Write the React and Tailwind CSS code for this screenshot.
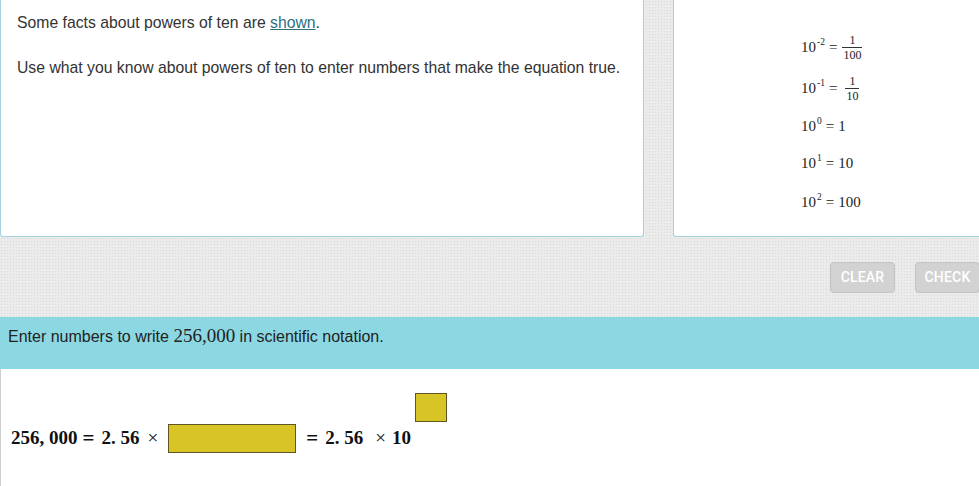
import React from 'react';

const sans = { fontFamily: '"Liberation Sans", Arial, sans-serif' };
const serif = { fontFamily: '"Liberation Serif", "Times New Roman", serif' };

function Frac({ num, den }) {
  return (
    <span className="inline-flex flex-col items-center leading-none mx-[2px]">
      <span className="text-[12px] px-[1px] pb-[1px]">{num}</span>
      <span className="text-[12px] px-[1px] pt-[1px] border-t border-[#333]">{den}</span>
    </span>
  );
}

function Power({ exp }) {
  return (
    <span className="inline-flex items-start leading-none">
      <span>10</span>
      <span className="text-[9.5px] -mt-[2px] ml-[1px]">{exp}</span>
    </span>
  );
}

export default function App() {
  return (
    <div
      className="w-[979px] h-[486px] overflow-hidden flex flex-col bg-[#ebebeb] bg-[image:radial-gradient(circle,#d9d9d9_0.7px,transparent_0.9px)] bg-[size:3px_3px]"
      style={sans}
    >
      {/* top cards */}
      <div className="flex h-[237px] shrink-0">
        <div className="w-[644px] h-full bg-white border-x border-b border-[#a3d4de] rounded-b-[3px] pl-[16px] pt-[14px] text-[15.75px] text-[#333]">
          <p className="leading-[18px]">
            Some facts about powers of ten are{' '}
            <span className="text-[#2f6f7f] underline">shown</span>.
          </p>
          <p className="leading-[18px] mt-[27px]">
            Use what you know about powers of ten to enter numbers that make the equation true.
          </p>
        </div>
        <div className="ml-[29px] flex-1 h-full bg-white border-l border-b border-[#a3d4de] rounded-bl-[3px] pl-[127px] text-[15px] text-[#222]" style={serif}>
          <div className="h-[30px] mt-[32px] flex items-center">
            <Power exp="-2" />
            <span className="ml-[4px] mr-[3px]">=</span>
            <Frac num="1" den="100" />
          </div>
          <div className="h-[30px] mt-[11px] flex items-center">
            <Power exp="-1" />
            <span className="ml-[4px] mr-[6px]">=</span>
            <Frac num="1" den="10" />
          </div>
          <div className="h-[30px] mt-[8px] flex items-center">
            <Power exp="0" />
            <span className="ml-[4px] mr-[4px]">=</span>
            <span>1</span>
          </div>
          <div className="h-[30px] mt-[7px] flex items-center">
            <Power exp="1" />
            <span className="ml-[4px] mr-[4px]">=</span>
            <span>10</span>
          </div>
          <div className="h-[30px] mt-[9px] flex items-center">
            <Power exp="2" />
            <span className="ml-[4px] mr-[4px]">=</span>
            <span>100</span>
          </div>
        </div>
      </div>

      {/* buttons */}
      <div className="flex justify-end gap-[20px] mt-[25px] shrink-0" style={{ fontFamily: 'Roboto, "Liberation Sans", sans-serif' }}>
        <button className="w-[65px] h-[31px] bg-[#d2d2d2] border border-[#c2c2c2] rounded-[4px] text-white text-[14px] font-medium tracking-[0.2px]">
          CLEAR
        </button>
        <button className="w-[65px] h-[31px] bg-[#d2d2d2] border border-[#c2c2c2] rounded-[4px] text-white text-[14px] font-medium tracking-[0.2px] -mr-[1px]">
          CHECK
        </button>
      </div>

      {/* prompt bar */}
      <div className="mt-[24px] h-[52px] shrink-0 bg-[#8bd8e3] pl-[8px] pt-[9px] text-[16px] text-[#222] leading-[20px]">
        Enter numbers to write{' '}
        <span className="text-[19px]" style={serif}>256,000</span> in scientific notation.
      </div>

      {/* equation */}
      <div className="flex-1 bg-white border-l border-[#cfcfcf] pl-[10px] pt-[24px]">
        <div className="flex items-start text-[19px] font-bold text-[#111] leading-[22px]" style={serif}>
          <div className="mt-[34px] flex whitespace-pre">
            <span>256, 000</span>
            <span className="ml-[5px] text-[21px] leading-[22px]">=</span>
            <span className="ml-[7px]">2. 56</span>
            <span className="ml-[8px] font-normal">×</span>
          </div>
          <div className="ml-[10px] mt-[31px] w-[128px] h-[29px] bg-[#d9c425] border border-[#5f5526]" />
          <div className="mt-[34px] flex whitespace-pre">
            <span className="ml-[10px] text-[21px] leading-[22px]">=</span>
            <span className="ml-[7px]">2. 56</span>
            <span className="ml-[12px] font-normal">×</span>
            <span className="ml-[6px]">10</span>
          </div>
          <div className="ml-[4px] w-[32px] h-[29px] bg-[#d9c425] border border-[#5f5526]" />
        </div>
      </div>
    </div>
  );
}
